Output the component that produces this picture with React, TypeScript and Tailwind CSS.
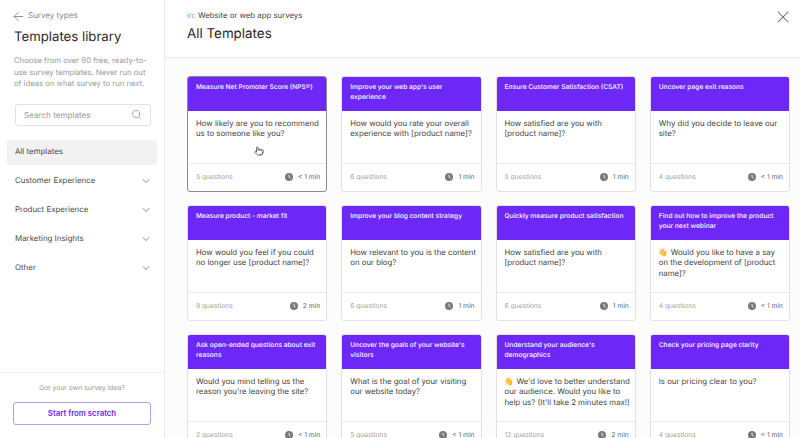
import { ArrowLeft, ChevronDown, Pointer, Search, X } from "lucide-react";

type Template = {
  title: string;
  question: string;
  count: string;
  time: string;
};

const TEMPLATES: Template[] = [
  { title: "Measure Net Promoter Score (NPS®)", question: "How likely are you to recommend us to someone like you?", count: "5 questions", time: "< 1 min" },
  { title: "Improve your web app's user experience", question: "How would you rate your overall experience with [product name]?", count: "6 questions", time: "1 min" },
  { title: "Ensure Customer Satisfaction (CSAT)", question: "How satisfied are you with [product name]?", count: "5 questions", time: "1 min" },
  { title: "Uncover page exit reasons", question: "Why did you decide to leave our site?", count: "4 questions", time: "< 1 min" },
  { title: "Measure product - market fit", question: "How would you feel if you could no longer use [product name]?", count: "9 questions", time: "2 min" },
  { title: "Improve your blog content strategy", question: "How relevant to you is the content on our blog?", count: "6 questions", time: "1 min" },
  { title: "Quickly measure product satisfaction", question: "How satisfied are you with [product name]?", count: "6 questions", time: "1 min" },
  { title: "Find out how to improve the product your next webinar", question: "👋 Would you like to have a say\non the development of [product name]?", count: "4 questions", time: "< 1 min" },
  { title: "Ask open-ended questions about exit reasons", question: "Would you mind telling us the reason you're leaving the site?", count: "2 questions", time: "< 1 min" },
  { title: "Uncover the goals of your website's visitors", question: "What is the goal of your visiting our website today?", count: "5 questions", time: "< 1 min" },
  { title: "Understand your audience's demographics", question: "👋 We'd love to better understand our audience. Would you like to help us? (It'll take 2 minutes max!)", count: "12 questions", time: "2 min" },
  { title: "Check your pricing page clarity", question: "Is our pricing clear to you?", count: "4 questions", time: "< 1 min" },
];

const CATEGORIES = ["Customer Experience", "Product Experience", "Marketing Insights", "Other"];

// solid clock disc, the lucide one can't do white hands on a filled circle
function ClockDot() {
  return (
    <svg width="8" height="8" viewBox="0 0 8 8">
      <circle cx="4" cy="4" r="4" fill="#7a7a7a" />
      <path d="M4 1.8V4l1.6 1.2" fill="none" stroke="#ffffff" strokeWidth="0.8" />
    </svg>
  );
}

function TemplateCard({ template, hovered }: { template: Template; hovered: boolean }) {
  return (
    <div
      className={`relative flex h-[116px] flex-col overflow-hidden rounded-[3px] bg-white border ${
        hovered ? "border-[#8a8a8a]" : "border-[#e2e2e2]"
      }`}
    >
      <div className="h-[34px] shrink-0 bg-[#6d28f7] pt-[6px] pr-[5px] pl-2 text-[6.6px] leading-[9.5px] font-semibold text-[#ece4ff]">
        {template.title}
      </div>
      <div className="flex-1 border-b border-[#ebebeb] pt-[6.5px] pr-[4px] pl-2 text-[7.8px] leading-[10.6px] whitespace-pre-line text-[#444444]">
        {template.question}
      </div>
      <div className="flex h-[27px] shrink-0 items-center justify-between pr-[6px] pl-2 text-[6.7px] text-[#a3a3a3]">
        <span>{template.count}</span>
        <span className="flex items-center gap-[5px] text-[#666666]">
          <ClockDot />
          {template.time}
        </span>
      </div>
      {hovered && (
        <Pointer size={10} className="absolute top-[69px] left-[66px] text-[#555555]" />
      )}
    </div>
  );
}

export default function App() {
  return (
    <div className="flex h-[438px] w-[800px] overflow-hidden bg-white font-['Inter',sans-serif] [text-rendering:geometricPrecision]">
      {/* Sidebar */}
      <aside className="flex w-[165px] shrink-0 flex-col border-r border-[#ebebeb]">
        <div className="flex-1 pt-[10px]">
          <div className="flex h-[10px] items-center gap-[2px] pl-[11px] text-[8px] leading-[10px] text-[#8a8a8a]">
            <ArrowLeft size={15} strokeWidth={1.25} className="mt-[2px] text-[#777777]" />
            Survey types
          </div>
          <h1 className="mt-[8px] pl-[14px] text-[13.2px] leading-[18px] text-[#2b2b2b]">Templates library</h1>
          <p className="mt-[9px] pr-[14px] pl-[14px] text-[7.7px] leading-[11.6px] text-[#9a9a9a]">
            Choose from over 90 free, ready-to-use survey templates. Never run out of ideas on what survey to run next.
          </p>
          <div className="mt-[14px] mr-[13px] ml-[15px] flex h-[22px] items-center justify-between rounded-[3px] border border-[#e2e2e2] px-[8px] text-[8.1px] text-[#999999]">
            Search templates
            <Search size={11} strokeWidth={1.5} className="text-[#888888]" />
          </div>
          <nav className="mt-[14px] px-[7px] text-[7.9px] text-[#4a4a4a]">
            <div className="flex h-[25px] items-center rounded-[2px] bg-[#f2f2f2] pl-[8px]">All templates</div>
            {CATEGORIES.map((name) => (
              <div key={name} className="mt-[4px] flex h-[25px] items-center justify-between pr-[5px] pl-[8px]">
                {name}
                <ChevronDown size={12} strokeWidth={1.5} className="text-[#666666]" />
              </div>
            ))}
          </nav>
        </div>
        <div className="flex h-[66px] shrink-0 flex-col items-center border-t border-[#f0f0f0] pt-[10px]">
          <span className="text-[6.8px] leading-[10px] text-[#999999]">Got your own survey idea?</span>
          <button className="mt-[9px] h-[23px] w-[138px] rounded-[3px] border border-[#b69cf5] text-[7.8px] font-semibold text-[#6d28f7]">
            Start from scratch
          </button>
        </div>
      </aside>

      {/* Main */}
      <main className="flex min-w-0 flex-1 flex-col">
        <header className="flex h-[58px] shrink-0 justify-between border-b border-[#e8e8e8] pr-[7px] pl-[22px]">
          <div className="pt-[10px]">
            <div className="text-[7.8px] leading-[10px] text-[#444444]">
              <span className="text-[#999999]">in: </span>Website or web app surveys
            </div>
            <h2 className="mt-[5px] text-[13.4px] leading-[18px] text-[#2b2b2b]">All Templates</h2>
          </div>
          <X size={20} strokeWidth={1.25} className="mt-[7px] text-[#666666]" />
        </header>
        <div className="grid flex-1 grid-cols-4 content-start gap-x-[14px] gap-y-[13px] overflow-hidden bg-[#fcfcfc] pt-[18px] pr-[10px] pl-[22px]">
          {TEMPLATES.map((t, i) => (
            <TemplateCard key={t.title} template={t} hovered={i === 0} />
          ))}
        </div>
      </main>
    </div>
  );
}
